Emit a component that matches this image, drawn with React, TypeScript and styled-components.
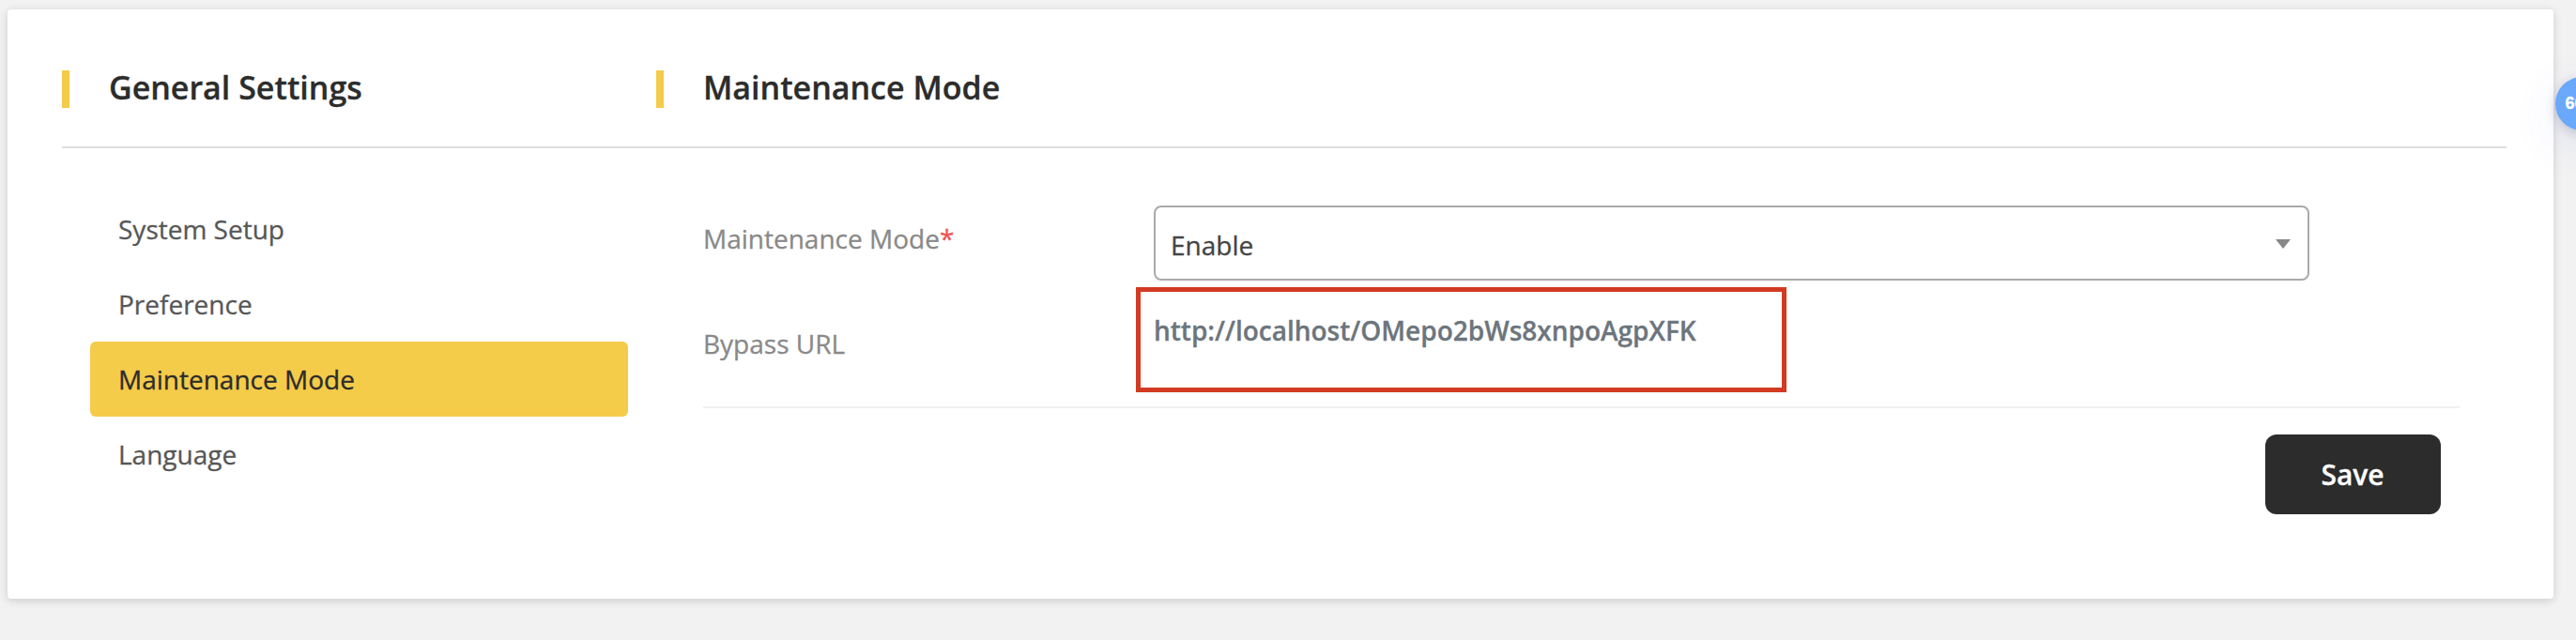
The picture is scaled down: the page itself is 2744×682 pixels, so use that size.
import styled, { createGlobalStyle } from "styled-components";

const GlobalStyle = createGlobalStyle`
  * {
    box-sizing: border-box;
  }
  body {
    margin: 0;
    overflow: hidden;
    background: #f2f2f2;
    font-family: "Open Sans", sans-serif;
    font-size: 28px;
    color: #2c2c2c;
    -webkit-text-stroke: 0.3px;
  }
`;

const Page = styled.div`
  position: relative;
  height: 682px;
  padding: 10px 24px 44px 8px;
  overflow: hidden;
`;
const Card = styled.main`
  height: 628px;
  padding: 0 50px 0 58px;
  background: #fff;
  border-radius: 4px;
  box-shadow: 0 2px 10px rgba(0, 0, 0, 0.16);
`;
const Header = styled.header`
  display: grid;
  grid-template-columns: 633px 1fr;
  align-items: center;
  height: 148px;
  padding-top: 24px;
  border-bottom: 2px solid #dedede;
`;
const Title = styled.h2`
  display: flex;
  align-items: flex-start;
  gap: 42px;
  height: 40px;
  margin: 0;
  font-size: 34px;
  font-weight: 600;
  line-height: 37px;
  &::before {
    content: "";
    width: 8px;
    height: 40px;
    background: #f5cb4a;
  }
`;
const Body = styled.div`
  display: grid;
  grid-template-columns: 573px 1fr;
  column-gap: 80px;
  padding: 46px 50px 0 30px;
`;
const Menu = styled.ul`
  margin: 0;
  padding: 0;
  list-style: none;
`;
const MenuItem = styled.li<{ $active?: boolean }>`
  height: 80px;
  padding-left: 30px;
  line-height: 80px;
  border-radius: 6px;
  color: ${(props) => (props.$active ? "#2c2c2c" : "#575757")};
  background: ${(props) => (props.$active ? "#f5cb4a" : "transparent")};
`;
const Form = styled.form`
  display: flex;
  flex-direction: column;
`;
const Row = styled.div<{ $height: number }>`
  display: grid;
  grid-template-columns: 480px 1fr;
  height: ${(props) => props.$height}px;
`;
const Label = styled.label<{ $top: number }>`
  padding-top: ${(props) => props.$top}px;
  line-height: 40px;
  color: #898989;
  span {
    color: #ee5451;
  }
`;
const Select = styled.div`
  display: flex;
  align-items: center;
  justify-content: space-between;
  width: 1231px;
  height: 80px;
  margin-top: 15px;
  padding: 4px 18px 0 16px;
  border: 2px solid #aaa;
  border-radius: 8px;
  color: #444;
`;
const Arrow = styled.svg`
  display: block;
  width: 16px;
  height: 10px;
  margin-bottom: 2px;
  fill: #888;
`;
const Highlight = styled.div`
  width: 693px;
  height: 112px;
  margin: 7px 0 0 -19px;
  padding: 21px 0 0 14px;
  border: 5px solid #d33a22;
  line-height: 40px;
  font-weight: 600;
  color: #6c757d;
`;
const Footer = styled.div`
  display: flex;
  justify-content: flex-end;
  padding: 28px 20px 0 0;
  border-top: 2px solid #f0f0f0;
`;
const SaveButton = styled.button`
  width: 187px;
  height: 85px;
  padding: 0 1px 0 0;
  border: 0;
  border-radius: 12px;
  background: #2c2c2c;
  color: #fff;
  font: 600 30px "Open Sans", sans-serif;
`;
// floating badge, hangs over the right edge of the window
const Badge = styled.div`
  position: absolute;
  top: 82px;
  left: 2722px;
  width: 57px;
  height: 57px;
  border-radius: 50%;
  background: #69a8fa;
  box-shadow: 0 14px 50px rgba(80, 100, 220, 0.12),
    0 4px 12px rgba(40, 40, 80, 0.2);
  color: #fff;
  font: bold 18px / 56px "Liberation Sans", sans-serif;
  text-align: center;
`;

const menu = ["System Setup", "Preference", "Maintenance Mode", "Language"];

function App() {
  return (
    <Page>
      <GlobalStyle />
      <Card>
        <Header>
          <Title>General Settings</Title>
          <Title>Maintenance Mode</Title>
        </Header>
        <Body>
          <Menu>
            {menu.map((item) => (
              <MenuItem key={item} $active={item === "Maintenance Mode"}>
                {item}
              </MenuItem>
            ))}
          </Menu>
          <Form>
            <Row $height={95}>
              <Label $top={30}>
                Maintenance Mode<span>*</span>
              </Label>
              <Select>
                Enable
                <Arrow viewBox="0 0 16 10">
                  <path d="M0 0h16L8 10z" />
                </Arrow>
              </Select>
            </Row>
            <Row $height={134}>
              <Label $top={47}>Bypass URL</Label>
              <Highlight>http://localhost/OMepo2bWs8xnpoAgpXFK</Highlight>
            </Row>
            <Footer>
              <SaveButton type="button">Save</SaveButton>
            </Footer>
          </Form>
        </Body>
      </Card>
      <Badge>60%</Badge>
    </Page>
  );
}

export default App;
